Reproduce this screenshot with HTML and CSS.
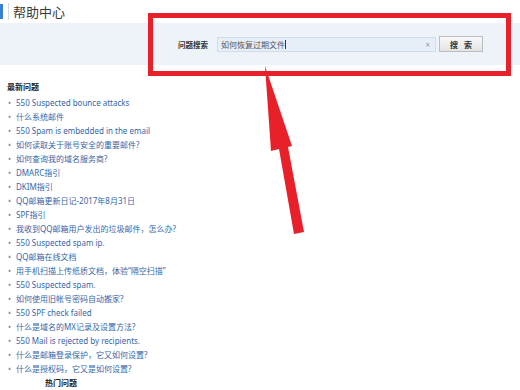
FILE: index.html
```html
<!DOCTYPE html>
<html lang="zh-CN">
<head>
    <meta charset="UTF-8">
    <title>帮助中心</title>
    <link rel="stylesheet" href="styles.css">
</head>
<body>
    <div class="page">
        <!-- Header -->
        <div class="topbar">
            <span class="logo-edge"></span>
            <span class="divider"></span>
            <span class="title">帮助中心</span>
        </div>

        <!-- Search -->
        <div class="search-band">
            <span class="search-label">问题搜索</span>
            <div class="search-input">
                <span class="search-text">如何恢复过期文件</span><span class="caret"></span>
                <span class="clear">×</span>
            </div>
            <button class="search-btn">搜 索</button>
        </div>

        <!-- Latest questions -->
        <div class="latest">
            <div class="section-title">最新问题</div>
            <ul class="question-list">
                <li><a href="#">550 Suspected bounce attacks</a></li>
                <li><a href="#">什么系统邮件</a></li>
                <li><a href="#">550 Spam is embedded in the email</a></li>
                <li><a href="#">如何读取关于账号安全的重要邮件?</a></li>
                <li><a href="#">如何查询我的域名服务商?</a></li>
                <li><a href="#">DMARC指引</a></li>
                <li><a href="#">DKIM指引</a></li>
                <li><a href="#">QQ邮箱更新日记-2017年8月31日</a></li>
                <li><a href="#">SPF指引</a></li>
                <li><a href="#">我收到QQ邮箱用户发出的垃圾邮件，怎么办?</a></li>
                <li><a href="#">550 Suspected spam ip.</a></li>
                <li><a href="#">QQ邮箱在线文档</a></li>
                <li><a href="#">用手机扫描上传纸质文档，体验“隔空扫描”</a></li>
                <li><a href="#">550 Suspected spam.</a></li>
                <li><a href="#">如何使用旧帐号密码自动搬家?</a></li>
                <li><a href="#">550 SPF check failed</a></li>
                <li><a href="#">什么是域名的MX记录及设置方法?</a></li>
                <li><a href="#">550 Mail is rejected by recipients.</a></li>
                <li><a href="#">什么是邮箱登录保护，它又如何设置?</a></li>
                <li><a href="#">什么是授权码，它又是如何设置?</a></li>
            </ul>
            <div class="section-title hot">热门问题</div>
        </div>

        <!-- Annotation overlay -->
        <div class="mark-box"></div>
        <svg class="mark-arrow" width="520" height="390" viewBox="0 0 520 390">
            <polygon points="265,66 292,146 288,147 304,232 294,234 279,149 271,151" fill="#e8202a"/>
        </svg>
    </div>
</body>
</html>
```

FILE: styles.css
```css
* {
    margin: 0;
    padding: 0;
    box-sizing: border-box;
}

body {
    font-family: 'Noto Sans', 'Noto Sans CJK SC', sans-serif;
    background-color: #fff;
    color: #333;
}

.page {
    position: relative;
    width: 520px;
    height: 390px;
    overflow: hidden;
}

.topbar {
    height: 23px;
    display: flex;
    align-items: center;
}

.logo-edge {
    width: 3px;
    height: 15px;
    background-color: #3b7fd0;
}

.divider {
    width: 1px;
    height: 17px;
    margin-left: 5px;
    background-color: #d6d9de;
}

.title {
    margin-left: 4px;
    font-size: 13px;
    color: #3a3a3a;
}

.search-band {
    height: 42px;
    background-color: #eef3fa;
    display: flex;
    align-items: center;
    padding-left: 178px;
}

.search-label {
    font-size: 7.5px;
    font-weight: bold;
    color: #333;
    width: 39px;
}

.search-input {
    width: 219px;
    height: 15px;
    background-color: #e6eef8;
    border: 1px solid #d3dbe6;
    display: flex;
    align-items: center;
    padding-left: 3px;
    font-size: 8px;
    color: #555;
}

.caret {
    width: 1px;
    height: 9px;
    background-color: #333;
}

.clear {
    margin-left: auto;
    margin-right: 5px;
    color: #999;
    font-size: 8px;
}

.search-btn {
    width: 44px;
    height: 16px;
    margin-left: 3px;
    border: 1px solid #b9bcc0;
    background: linear-gradient(#f8f8f8, #e4e4e4);
    font-family: 'Noto Sans CJK SC', sans-serif;
    font-size: 8px;
    font-weight: bold;
    word-spacing: 4px;
    color: #333;
}

.latest {
    padding: 15px 0 0 7px;
}

.section-title {
    font-size: 8px;
    font-weight: bold;
    line-height: 14px;
    color: #222;
    margin-bottom: 2px;
}

.section-title.hot {
    margin-left: 38px;
}

.question-list {
    list-style: none;
}

.question-list li {
    font-size: 8px;
    line-height: 14px;
    color: #7d8da6;
}

.question-list li::before {
    content: "•";
    display: inline-block;
    width: 8px;
    padding-left: 1px;
}

.question-list a {
    color: #3566ab;
    text-decoration: none;
}

.mark-box {
    position: absolute;
    left: 148px;
    top: 13px;
    width: 363px;
    height: 63px;
    border: 5px solid #e8202a;
}

.mark-arrow {
    position: absolute;
    left: 0;
    top: 0;
}
```
